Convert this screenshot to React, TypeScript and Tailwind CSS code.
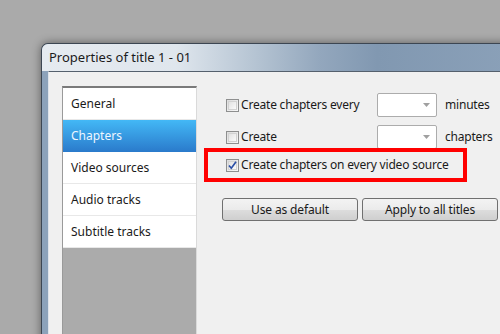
import React from "react";

const font = { fontFamily: '"Noto Sans", "Open Sans", sans-serif' };

function CheckBox({ checked = false }: { checked?: boolean }) {
  return (
    <span className="flex h-[13px] w-[13px] shrink-0 items-center justify-center border border-[#8e8f8f] bg-[linear-gradient(135deg,#dcdcdc,#f8f8f8)]">
      <span className="flex h-[9px] w-[9px] items-center justify-center border border-[#d2d2d2] bg-[linear-gradient(135deg,#e2e2e2,#fafafa)]">
        {checked && (
          <svg width="9" height="9" viewBox="0 0 9 9" className="overflow-visible">
            <path d="M1 4.5 L3.3 7.2 L8 0.8" fill="none" stroke="#2b4fa6" strokeWidth="1.7" />
          </svg>
        )}
      </span>
    </span>
  );
}

function Combo() {
  return (
    <div className="flex h-[24px] w-[60px] shrink-0 items-center justify-end rounded-[2px] border border-[#acacac] bg-white pr-[6px]">
      <svg width="7" height="4" viewBox="0 0 7 4">
        <path d="M0 0 H7 L3.5 4 Z" fill="#a0a0a0" />
      </svg>
    </div>
  );
}

function WinButton({ label }: { label: string }) {
  return (
    <button className="h-[23px] w-[136px] rounded-[3px] border border-[#707070] bg-[linear-gradient(#f3f3f3_0%,#ebebeb_50%,#dddddd_51%,#cfcfcf_100%)] text-[12px] tracking-[-0.15px] text-[#1a1a1a]">
      {label}
    </button>
  );
}

const tabs = ["General", "Chapters", "Video sources", "Audio tracks", "Subtitle tracks"];

export default function App() {
  return (
    <div className="h-[334px] w-[500px] overflow-hidden bg-[#aaaaaa] pl-[41px] pt-[43px]" style={font}>
      <div className="flex h-[320px] w-[480px] flex-col overflow-hidden rounded-tl-[7px] border-l border-t border-[#3c4652] bg-[#8ca2ba] shadow-[0_0_10px_rgba(0,0,0,0.45)]">
        {/* title bar */}
        <div className="flex h-[27px] shrink-0 items-center bg-[linear-gradient(to_right,#e6ebf0_0%,#dfe6ed_28%,#b4c3d2_45%,#93a7bd_58%,#8198b1_70%,#8ba1b9_100%)] pl-[7px]">
          <span className="text-[13px] text-[#1b1b1b]">Properties of title 1 - 01</span>
        </div>
        {/* frame + client */}
        <div className="flex flex-1 pl-[6px]">
          <div className="flex flex-1 border-l border-t border-l-[#dde3ea] border-t-[#55606d] bg-[#f0f0f0] pl-[13px] pt-[14px]">
            {/* list */}
            <div className="flex w-[135px] shrink-0 flex-col border-l border-r border-t-2 border-l-[#9a9a9a] border-r-[#dadada] border-t-[#7a7a7a] bg-[#ababab]">
              {tabs.map((t, i) =>
                i === 1 ? (
                  <div
                    key={t}
                    className="flex h-[32px] items-center bg-[linear-gradient(#43b8f6,#2a7acb)] pl-[8px] text-[12px] text-[#eef6ff]"
                  >
                    {t}
                  </div>
                ) : (
                  <div
                    key={t}
                    className="flex h-[32px] items-center border-b border-[#e8e8e8] bg-white pl-[8px] text-[12px] text-[#1a1a1a]"
                  >
                    {t}
                  </div>
                )
              )}
            </div>
            {/* right panel */}
            <div className="flex flex-col pt-[7px] text-[12px] tracking-[-0.2px] text-[#1a1a1a]">
              <div className="flex h-[24px] items-center pl-[29px]">
                <div className="flex w-[151px] items-center gap-[2px]">
                  <CheckBox />
                  <span>Create chapters every</span>
                </div>
                <Combo />
                <span className="ml-[8px]">minutes</span>
              </div>
              <div className="mt-[8px] flex h-[24px] items-center pl-[29px]">
                <div className="flex w-[151px] items-center gap-[2px]">
                  <CheckBox />
                  <span>Create</span>
                </div>
                <Combo />
                <span className="ml-[8px]">chapters</span>
              </div>
              <div className="ml-[7px] mt-[-1px] flex h-[34px] w-[263px] items-center gap-[2px] border-4 border-[#ff0000] pl-[18px]">
                <CheckBox checked />
                <span>Create chapters on every video source</span>
              </div>
              <div className="ml-[25px] mt-[16px] flex gap-[4px]">
                <WinButton label="Use as default" />
                <WinButton label="Apply to all titles" />
              </div>
            </div>
          </div>
        </div>
      </div>
    </div>
  );
}
